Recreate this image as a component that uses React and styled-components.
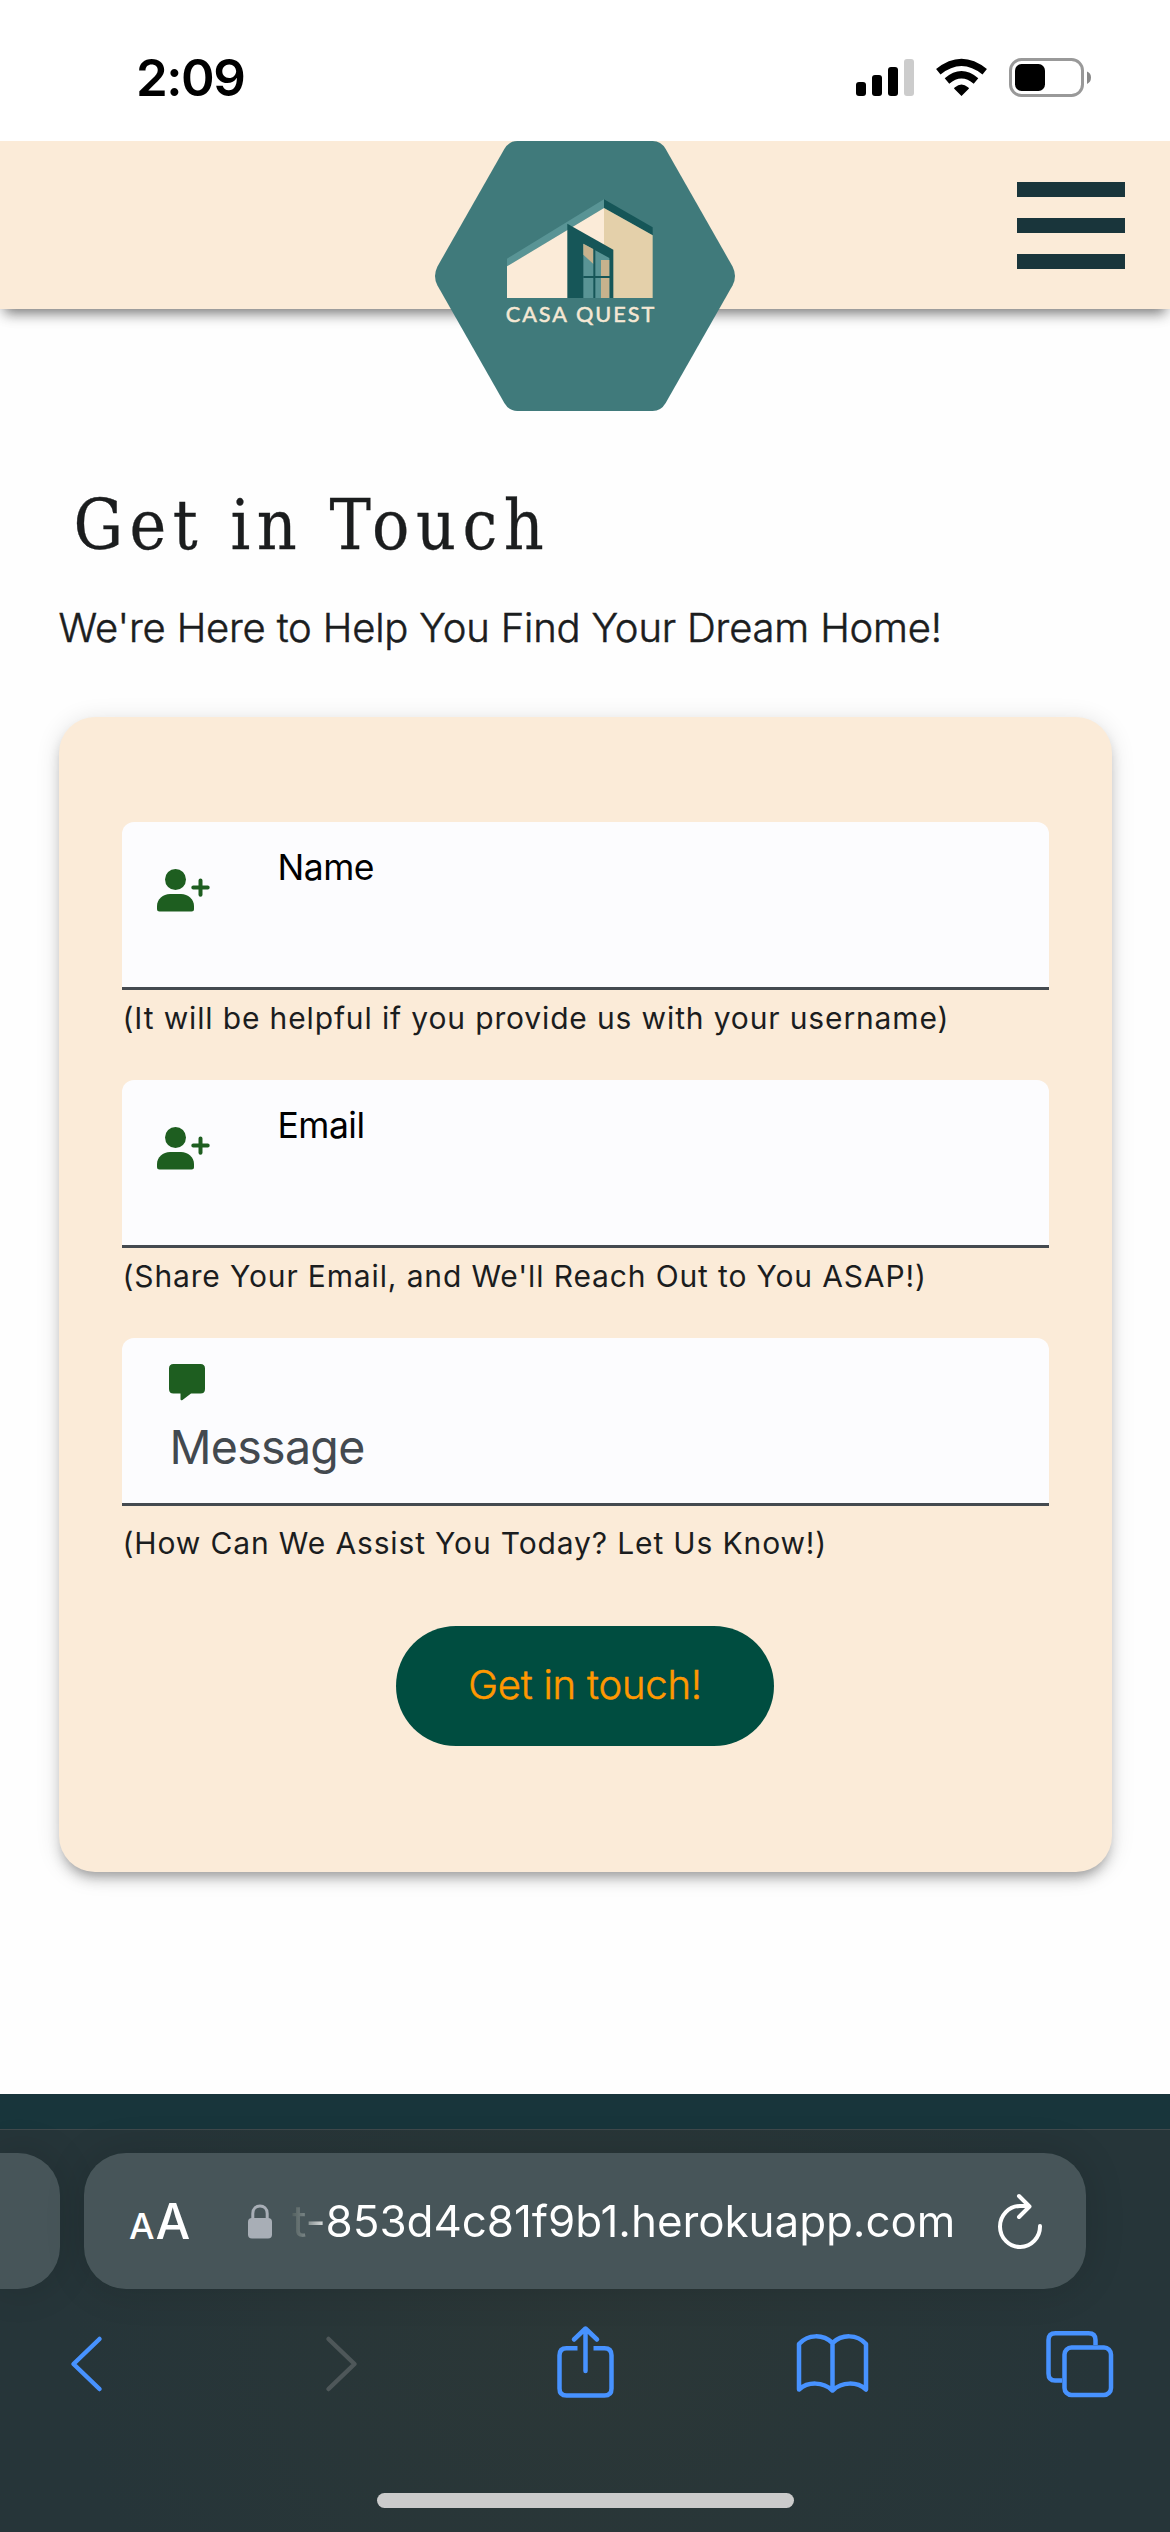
import React from "react";
import styled, { createGlobalStyle } from "styled-components";

const sans = `Inter, "Liberation Sans", sans-serif`;
const cream = "#fbebd8";

const GlobalStyle = createGlobalStyle`
  * { box-sizing: border-box; }
  body { margin: 0; background: #fefefe; font-family: ${sans}; }
  h1, p { margin: 0; font-weight: 400; }
`;

const Page = styled.div`
  display: flex;
  flex-direction: column;
  width: 1170px;
  height: 2532px;
  overflow: hidden;
  background: #fefefe;
  color: #1b1d1e;
`;

const StatusBar = styled.div`
  flex: none;
  display: flex;
  align-items: flex-start;
  height: 141px;
  padding: 58px 79px 0 136px;
  background: #fff;
`;

const Time = styled.span`
  flex: 1;
  font-size: 51px;
  font-weight: 600;
  line-height: 40px;
  letter-spacing: -1.5px;
  color: #000;
`;

const Header = styled.header`
  position: relative;
  flex: none;
  display: flex;
  justify-content: flex-end;
  align-items: center;
  height: 168px;
  padding-right: 45px;
  background: ${cream};
  box-shadow: 0 9px 12px -5px rgba(0, 0, 0, 0.45), 0 6px 16px -2px rgba(0, 0, 0, 0.14);
  clip-path: inset(0 0 -110px 0);
`;

const LogoLink = styled.a`
  position: absolute;
  top: 0;
  left: 435px;
  width: 300px;
  height: 270px;
  svg { display: block; }
`;

const MenuButton = styled.button`
  display: flex;
  flex-direction: column;
  gap: 21px;
  width: 108px;
  margin-top: 1px;
  padding: 0;
  border: 0;
  background: none;
`;

const MenuBar = styled.span`
  height: 15px;
  background: #19353b;
`;

const Main = styled.main`
  flex: 1;
  display: flex;
  flex-direction: column;
  padding: 176px 58.5px 0;
`;

const Title = styled.h1`
  padding-left: 15px;
  font-family: "DejaVu Serif Condensed", "DejaVu Serif", serif;
  font-stretch: condensed;
  font-size: 69px;
  line-height: 80px;
  letter-spacing: 6.5px;
  white-space: nowrap;
  -webkit-text-stroke: 0.3px #1b1d1e;
`;

const Subtitle = styled.p`
  margin: 39px 0 65px;
  font-size: 40px;
  font-weight: 300;
  line-height: 48px;
  letter-spacing: -0.18px;
  white-space: nowrap;
  -webkit-text-stroke: 0.5px #1b1d1e;
`;

const Card = styled.form`
  display: flex;
  flex-direction: column;
  height: 1155px;
  padding: 105px 63px 0;
  border-radius: 36px;
  background: ${cream};
  box-shadow: 0 9px 9px -6px rgba(0, 0, 0, 0.2), 0 9px 12px 0 rgba(0, 0, 0, 0.14),
    0 3px 24px 0 rgba(0, 0, 0, 0.12);
`;

const Field = styled.label`
  display: flex;
  flex-direction: ${(p) => (p.$stacked ? "column" : "row")};
  align-items: flex-start;
  height: 168px;
  padding: ${(p) => (p.$stacked ? "26px 47px 0" : "26px 35px 0")};
  border-bottom: 3px solid #444a50;
  border-radius: 12px 12px 0 0;
  background: #fcfcfe;
`;

const FieldIcon = styled.span`
  display: flex;
  margin: ${(p) => p.$margin};
`;

const FieldLabel = styled.span`
  padding-left: ${(p) => (p.$large ? 1 : 0)}px;
  color: ${(p) => (p.$large ? "#43494f" : "#000")};
  font-size: ${(p) => (p.$large ? 46.5 : 35.5)}px;
  line-height: ${(p) => (p.$large ? 56 : 40)}px;
  letter-spacing: ${(p) => (p.$large ? -0.7 : -0.5)}px;
`;

const Hint = styled.p`
  margin: ${(p) => p.$gap}px 0 ${(p) => p.$after}px 1px;
  font-size: 30px;
  line-height: 40px;
  letter-spacing: 0.86px;
  white-space: nowrap;
`;

const Submit = styled.button`
  align-self: center;
  width: 378px;
  height: 120px;
  padding: 0 0 3px;
  border: 0;
  border-radius: 60px;
  background: #004d40;
  color: #ff9800;
  font: 300 40px/48px ${sans};
  letter-spacing: -0.2px;
  -webkit-text-stroke: 0.5px #ff9800;
`;

const FooterStrip = styled.div`
  flex: none;
  height: 35px;
  background: #18353b;
`;

const Browser = styled.footer`
  flex: none;
  display: flex;
  flex-direction: column;
  height: 403px;
  border-top: 1px solid #40494c;
  background: radial-gradient(ellipse 520px 420px at 50% 55%, #2b3737, #263539);
`;

const AddressRow = styled.div`
  display: flex;
  gap: 24px;
  height: 136px;
  margin-top: 23px;
`;

const PreviousTab = styled.div`
  width: 60px;
  border-radius: 0 42px 42px 0;
  background: #475559;
  box-shadow: 0 0 40px rgba(0, 0, 0, 0.14);
`;

const AddressBar = styled.div`
  display: flex;
  align-items: center;
  width: 1002px;
  padding: 0 43px 0 45px;
  border-radius: 42px;
  background: #475559;
  box-shadow: 0 0 40px rgba(0, 0, 0, 0.14);
  color: #fff;
`;

const TextSize = styled.span`
  display: flex;
  align-items: baseline;
  gap: 2px;
  width: 119px;
  margin-top: 6px;
  line-height: 56px;
`;

const Glyph = styled.span`
  font-size: ${(p) => p.$size}px;
  font-weight: 500;
  letter-spacing: -1px;
`;

const Url = styled.span`
  flex: 1;
  margin: 0 0 0 20px;
  font-size: 44px;
  line-height: 56px;
  letter-spacing: -0.08px;
  white-space: nowrap;
  background: linear-gradient(90deg, #53605f 0, #7b8687 14px, #fff 38px);
  background-clip: text;
  color: transparent;
`;

const Toolbar = styled.nav`
  display: flex;
  justify-content: space-between;
  height: 84px;
  margin-top: 31px;
  padding: 0 50px 0 46px;
`;

const HomeIndicator = styled.div`
  width: 417px;
  height: 15px;
  margin: 89px auto 0;
  border-radius: 8px;
  background: #cbcbcb;
`;

const StatusIcons = () => (
  <svg width="235" height="39" viewBox="856 58 235 39">
    <rect x="856" y="82" width="10" height="14" rx="3" />
    <rect x="872" y="75" width="10" height="21" rx="3" />
    <rect x="888" y="67" width="10" height="29" rx="3" />
    <rect x="904" y="59" width="10" height="37" rx="3" fill="#ccc" />
    <path d="M961.5 96 954 88.5Q954.300 87.500 955 87.200 961.500 82 968 87.200 968.700 87.500 969 88.500Z" />
    <path d="M938.300 71.800Q961.500 53 984.700 71.800M947 81Q961.500 68.500 976 81" fill="none" stroke="#000" strokeWidth="7" />
    <rect x="1010.500" y="59.500" width="72" height="36" rx="11" fill="none" stroke="#999" strokeWidth="3" />
    <rect x="1015" y="64" width="30" height="27" rx="6.500" />
    <path d="M1087 71.500Q1091 73 1091 77.500T1087 84Z" fill="#888" />
  </svg>
);

const Logo = () => (
  <svg width="300" height="270" viewBox="45 33 900 810">
    <path
      fill="#407a7b"
      d="M292 33H698Q723 33 737 57L938 410Q952 438 938 466L737 819Q723 843 698 843H292Q267 843 253 819L52 466Q38 438 52 410L253 57Q267 33 292 33Z"
    />
    <path d="M261 386 552 208V234L261 409Z" fill="#599495" />
    <path d="M552 208 698 292V316L552 234Z" fill="#165658" />
    <path d="M261 409 552 234V504H261Z" fill="#fbebd8" />
    <path d="M552 234 698 316V504H552Z" fill="#e4d0aa" />
    <path d="M442 281 580 359V504H442Z" fill="#165658" />
    <path d="M490 341 568 384V504H490Z" fill="#599495" />
    <path d="M490 341 521 358V403L490 374Z" fill="#c7b28d" />
    <path d="M543 390H568V504H543Z" fill="#c7b28d" />
    <path d="M523 356V504M490 441H570" stroke="#165658" strokeWidth="6" />
    <text x="257" y="576" textLength="446" fill="#f5e8d4" fontFamily="Lato, sans-serif" fontSize="65" fontWeight="400" stroke="#f5e8d4" strokeWidth="1.500">
      CASA QUEST
    </text>
  </svg>
);

const PersonAdd = () => (
  <svg width="53" height="43" viewBox="157 869 53 43" fill="#1e5e20">
    <circle cx="175.500" cy="879.500" r="10.500" />
    <path d="M157 906C157 899 163 894 170 894H181C188 894 194 899 194 906V909Q194 911.500 191.500 911.500H159.500Q157 911.500 157 909Z" />
    <path d="M193.300 887.600H207.700M200.500 880.400V894.800" stroke="#1e5e20" strokeWidth="4" strokeLinecap="round" />
  </svg>
);

const ChatBubble = () => (
  <svg width="36" height="38" viewBox="0 0 36 38" fill="#1e5e20">
    <path d="M4.500 0H31.500Q36 0 36 4.500V25Q36 29.500 31.500 29.500H22L13.500 36Q11.500 37 11.500 35V29.500H4.500Q0 29.500 0 25V4.500Q0 0 4.500 0Z" />
  </svg>
);

const Lock = () => (
  <svg width="24" height="35" viewBox="0 0 24 35">
    <path d="M4.800 16V9.500C4.800-.5 19.200-.5 19.200 9.500V16" fill="none" stroke="#a8aeb6" strokeWidth="3" />
    <rect y="14" width="24" height="20.500" rx="4" fill="#a8aeb6" />
  </svg>
);

const Reload = () => (
  <svg width="46" height="56" viewBox="997 2191 46 56" fill="none" stroke="#fff" strokeWidth="4" strokeLinecap="round" strokeLinejoin="round">
    <path d="M1040 2224A20 20.500 0 1 1 1020 2204H1029M1019 2194 1029.500 2204.500 1019 2215" />
  </svg>
);

// The toolbar glyphs share one box size; x is the left edge of each glyph's own window.
const ToolIcon = ({ x, color = "#4792ff", children }) => (
  <svg width="82" height="84" viewBox={`${x} 2320 82 84`} fill="none" stroke={color} strokeWidth="4.5" strokeLinecap="round" strokeLinejoin="round">
    {children}
  </svg>
);

export default function App() {
  return (
    <>
      <GlobalStyle />
      <Page>
        <StatusBar>
          <Time>2:09</Time>
          <StatusIcons />
        </StatusBar>
        <Header>
          <LogoLink><Logo /></LogoLink>
          <MenuButton aria-label="Menu" type="button">
            <MenuBar />
            <MenuBar />
            <MenuBar />
          </MenuButton>
        </Header>
        <Main>
          <Title>Get in Touch</Title>
          <Subtitle>We're Here to Help You Find Your Dream Home!</Subtitle>
          <Card>
            <Field>
              <FieldIcon $margin="21px 68px 0 0"><PersonAdd /></FieldIcon>
              <FieldLabel>Name</FieldLabel>
            </Field>
            <Hint $gap={8} $after={42}>(It will be helpful if you provide us with your username)</Hint>
            <Field>
              <FieldIcon $margin="21px 68px 0 0"><PersonAdd /></FieldIcon>
              <FieldLabel>Email</FieldLabel>
            </Field>
            <Hint $gap={8} $after={42}>(Share Your Email, and We'll Reach Out to You ASAP!)</Hint>
            <Field $stacked>
              <FieldIcon $margin="0 0 17px"><ChatBubble /></FieldIcon>
              <FieldLabel $large>Message</FieldLabel>
            </Field>
            <Hint $gap={17} $after={63}>(How Can We Assist You Today? Let Us Know!)</Hint>
            <Submit type="button">Get in touch!</Submit>
          </Card>
        </Main>
        <FooterStrip />
        <Browser>
          <AddressRow>
            <PreviousTab />
            <AddressBar>
              <TextSize>
                <Glyph $size={36}>A</Glyph>
                <Glyph $size={49}>A</Glyph>
              </TextSize>
              <Lock />
              <Url>t-853d4c81f9b1.herokuapp.com</Url>
              <Reload />
            </AddressBar>
          </AddressRow>
          <Toolbar>
            <ToolIcon x={46}>
              <path d="M99.500 2339 73.500 2364 99.500 2389" />
            </ToolIcon>
            <ToolIcon x={294} color="#4e5759">
              <path d="M328.500 2339 354.500 2364 328.500 2389" />
            </ToolIcon>
            <ToolIcon x={542}>
              <path d="M577.500 2348.300H566.500Q559.500 2348.300 559.500 2355.300V2388.500Q559.500 2395.500 566.500 2395.500H604.500Q611.500 2395.500 611.500 2388.500V2355.300Q611.500 2348.300 604.500 2348.300H593.500" strokeLinecap="butt" />
              <path d="M585.500 2371V2329M574 2339.500 585.500 2328.500 597 2339.500" />
            </ToolIcon>
            <ToolIcon x={790}>
              <path d="M832.500 2343V2390M832.500 2343C823 2334 808 2334 799 2344V2389.500C808 2381.500 823 2381.500 832.500 2390.500C842 2381.500 857 2381.500 866 2389.500V2344C857 2334 842 2334 832.500 2343" />
            </ToolIcon>
            <ToolIcon x={1038}>
              <rect x="1064.500" y="2347.500" width="46.500" height="47.500" rx="7" />
              <path d="M1062 2380.500H1055Q1048.500 2380.500 1048.500 2373.500V2340Q1048.500 2333.300 1055.500 2333.300H1088.500Q1095.500 2333.300 1095.500 2340V2345" strokeLinecap="butt" />
            </ToolIcon>
          </Toolbar>
          <HomeIndicator />
        </Browser>
      </Page>
    </>
  );
}
